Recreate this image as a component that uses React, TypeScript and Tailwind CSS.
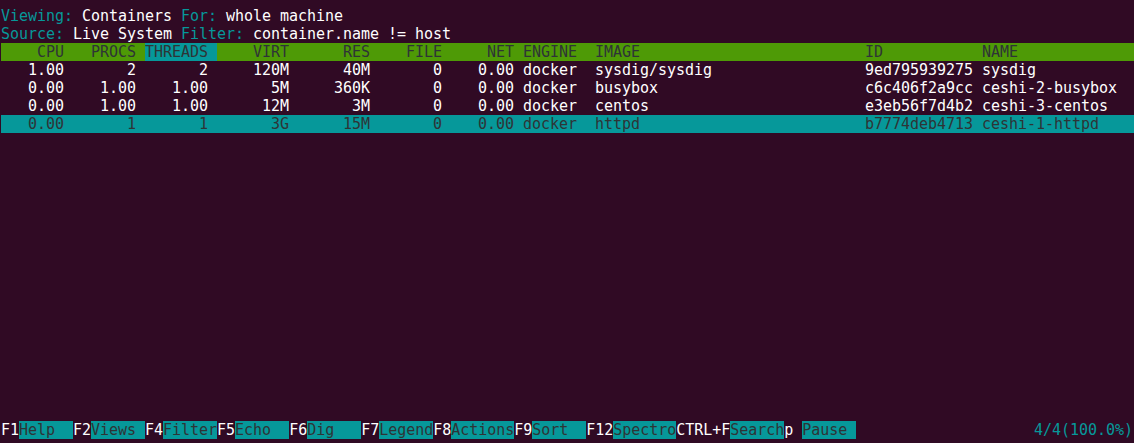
const COLS = 126;

type Row = string[];

// column layout: [kind, col] — "r" = right aligned, col is last column; "l" = left aligned, col is first column
const layout: [string, number][] = [
  ['r', 6],
  ['r', 14],
  ['r', 22],
  ['r', 31],
  ['r', 40],
  ['r', 48],
  ['r', 56],
  ['l', 58],
  ['l', 66],
  ['l', 96],
  ['l', 109],
];

const headers: Row = ['CPU', 'PROCS', 'THREADS', 'VIRT', 'RES', 'FILE', 'NET', 'ENGINE', 'IMAGE', 'ID', 'NAME'];

const rows: Row[] = [
  ['1.00', '2', '2', '120M', '40M', '0', '0.00', 'docker', 'sysdig/sysdig', '9ed795939275', 'sysdig'],
  ['0.00', '1.00', '1.00', '5M', '360K', '0', '0.00', 'docker', 'busybox', 'c6c406f2a9cc', 'ceshi-2-busybox'],
  ['0.00', '1.00', '1.00', '12M', '3M', '0', '0.00', 'docker', 'centos', 'e3eb56f7d4b2', 'ceshi-3-centos'],
  ['0.00', '1', '1', '3G', '15M', '0', '0.00', 'docker', 'httpd', 'b7774deb4713', 'ceshi-1-httpd'],
];

function lineOf(cells: Row): string {
  const chars = Array(COLS).fill(' ');
  cells.forEach((s, i) => {
    const [kind, col] = layout[i];
    const start = kind === 'r' ? col - s.length + 1 : col;
    for (let k = 0; k < s.length; k++) chars[start + k] = s[k];
  });
  return chars.join('');
}

const keys: [string, string][] = [
  ['F1', 'Help  '],
  ['F2', 'Views '],
  ['F4', 'Filter'],
  ['F5', 'Echo  '],
  ['F6', 'Dig   '],
  ['F7', 'Legend'],
  ['F8', 'Actions'],
  ['F9', 'Sort  '],
  ['F12', 'Spectro'],
  ['CTRL+F', 'Search'],
  ['p ', 'Pause '],
];

export default function App() {
  const head = lineOf(headers);

  return (
    <div
      className="flex h-[443px] w-[1134px] flex-col overflow-hidden bg-[#300a24] pt-[7px] pb-[4px] pl-px text-[15px] leading-[18px] tracking-[-0.03px] text-white whitespace-pre"
      style={{ fontFamily: '"DejaVu Sans Mono", "Liberation Mono", monospace' }}
    >
      <div>
        <span className="text-[#06989a]">Viewing:</span> Containers{' '}
        <span className="text-[#06989a]">For:</span> whole machine
      </div>
      <div>
        <span className="text-[#06989a]">Source:</span> Live System{' '}
        <span className="text-[#06989a]">Filter:</span> container.name != host
      </div>

      {/* column header, sort column highlighted */}
      <div className="bg-[#4e9a06] text-[#2e3436]">
        {head.slice(0, 16)}
        <span className="bg-[#06989a]">{head.slice(16, 24)}</span>
        {head.slice(24)}
      </div>

      {rows.map((r, i) =>
        i === rows.length - 1 ? (
          <div key={i} className="bg-[#06989a] text-[#2e3436]">
            {lineOf(r)}
          </div>
        ) : (
          <div key={i}>{lineOf(r)}</div>
        )
      )}

      {/* function key bar */}
      <div className="mt-auto flex">
        {keys.map(([k, label]) => (
          <span key={k}>
            {k}
            <span className="bg-[#06989a] text-[#2e3436]">{label}</span>
          </span>
        ))}
        <span className="ml-auto pr-px text-[#06989a]">4/4(100.0%)</span>
      </div>
    </div>
  );
}
